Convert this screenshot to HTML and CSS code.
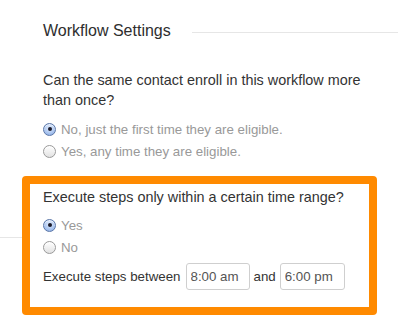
FILE: index.html
```html
<!DOCTYPE html>
<html>
<head>
<meta charset="utf-8">
<link rel="stylesheet" href="styles.css">
</head>
<body>
<div class="page">
  <div class="section">
    <div class="header">
      <h2 class="title">Workflow Settings</h2>
      <div class="rule"></div>
    </div>
    <p class="question q-first">Can the same contact enroll in this workflow more than once?</p>
    <div class="options">
      <label class="option"><span class="radio checked"></span>No, just the first time they are eligible.</label>
      <label class="option"><span class="radio"></span>Yes, any time they are eligible.</label>
    </div>
  </div>
  <div class="highlight-wrap">
    <div class="highlight">
      <p class="question">Execute steps only within a certain time range?</p>
      <div class="options options-tight">
        <label class="option"><span class="radio checked"></span>Yes</label>
        <label class="option"><span class="radio"></span>No</label>
      </div>
      <div class="range">
        <span>Execute steps between</span>
        <input class="time" type="text" value="8:00 am">
        <span>and</span>
        <input class="time" type="text" value="6:00 pm">
      </div>
    </div>
  </div>
</div>
</body>
</html>
```

FILE: styles.css
```css
* { box-sizing: border-box; }
html, body { margin: 0; padding: 0; background: #fff; }
body {
  font-family: "Liberation Sans", Arial, Helvetica, sans-serif;
  color: #333;
  width: 398px;
  height: 333px;
  overflow: hidden;
}
.section { padding: 22px 0 0 43px; }
.header { display: flex; align-items: center; height: 18px; }
.title {
  margin: 0;
  font-size: 16px;
  font-weight: normal;
  line-height: 18px;
  color: #2e2e2e;
  white-space: nowrap;
}
.rule { flex: 1; height: 1px; background: #e6e6e6; margin-left: 21px; margin-top: 2px; }
.question {
  margin: 0;
  font-size: 14.4px;
  line-height: 20px;
  color: #333;
  width: 330px;
}
.q-first { margin-top: 30px; }
.options { margin-top: 8px; display: flex; flex-direction: column; }
.options-tight { margin-top: 7px; }
.option {
  display: flex;
  align-items: center;
  height: 22px;
  font-size: 13.3px;
  color: #999;
}
.radio {
  width: 13px;
  height: 13px;
  border-radius: 50%;
  margin-right: 5px;
  border: 1px solid #9a9a9a;
  background: linear-gradient(#ffffff, #e2e2e2);
  box-shadow: inset 0 1px 1px rgba(255,255,255,0.8);
  display: flex;
  align-items: center;
  justify-content: center;
  flex: none;
}
.radio.checked {
  border-color: #5a76a8;
  background: radial-gradient(circle at 50% 35%, #e4efff 0%, #a9c4ef 60%, #7fa3de 100%);
}
.radio.checked::after {
  content: "";
  width: 4px;
  height: 4px;
  border-radius: 50%;
  background: #1a1a2a;
}
.highlight-wrap { position: relative; margin-top: 14px; }
.highlight-wrap::before {
  content: "";
  position: absolute;
  left: 0;
  top: 61px;
  width: 22px;
  height: 1px;
  background: #e6e6e6;
}
.highlight {
  margin-left: 22px;
  width: 355px;
  border: 8px solid #ff8a00;
  border-radius: 4px;
  padding: 3px 13px 17px 13px;
  background: #fff;
}
.range {
  margin-top: 5px;
  display: flex;
  align-items: center;
  height: 27px;
  font-size: 13.3px;
  color: #333;
}
.time {
  width: 64px;
  height: 27px;
  margin: 0 4px 0 5px;
  padding: 0 4px;
  border: 1px solid #cfcfcf;
  border-radius: 3px;
  font-family: "Liberation Sans", Arial, Helvetica, sans-serif;
  font-size: 13.3px;
  color: #555;
  background: #fff;
  outline: none;
}
.time:last-child { margin-left: 4px; width: 65px; }
```
